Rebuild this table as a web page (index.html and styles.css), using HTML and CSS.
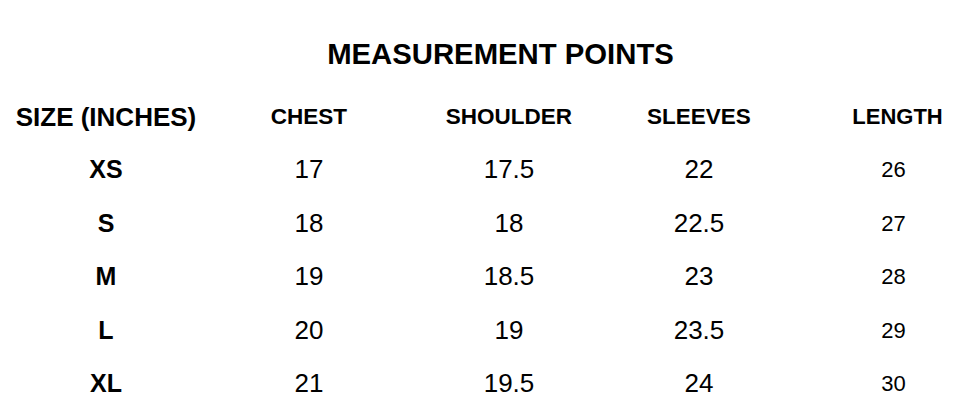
FILE: index.html
```html
<!DOCTYPE html>
<html lang="en">
<head>
<meta charset="utf-8">
<title>Measurement Points</title>
<link rel="stylesheet" href="styles.css">
</head>
<body>
<main class="chart">
  <h1 class="chart-title">MEASUREMENT POINTS</h1>
  <div class="chart-grid">
    <div class="cell head size-head">SIZE (INCHES)</div>
    <div class="cell head">CHEST</div>
    <div class="cell head">SHOULDER</div>
    <div class="cell head">SLEEVES</div>
    <div class="cell head last">LENGTH</div>

    <div class="cell size">XS</div>
    <div class="cell num">17</div>
    <div class="cell num">17.5</div>
    <div class="cell num">22</div>
    <div class="cell num last small">26</div>

    <div class="cell size">S</div>
    <div class="cell num">18</div>
    <div class="cell num">18</div>
    <div class="cell num">22.5</div>
    <div class="cell num last small">27</div>

    <div class="cell size">M</div>
    <div class="cell num">19</div>
    <div class="cell num">18.5</div>
    <div class="cell num">23</div>
    <div class="cell num last small">28</div>

    <div class="cell size">L</div>
    <div class="cell num">20</div>
    <div class="cell num">19</div>
    <div class="cell num">23.5</div>
    <div class="cell num last small">29</div>

    <div class="cell size">XL</div>
    <div class="cell num">21</div>
    <div class="cell num">19.5</div>
    <div class="cell num">24</div>
    <div class="cell num last small">30</div>
  </div>
</main>
</body>
</html>
```

FILE: styles.css
```css
html, body {
  margin: 0;
  padding: 0;
  background: #ffffff;
}

body {
  font-family: "Liberation Sans", Arial, sans-serif;
  color: #000000;
  width: 961px;
  height: 419px;
  overflow: hidden;
}

.chart {
  padding-top: 34px;
}

.chart-title {
  margin: 0 0 17px 40px;
  font-size: 29.3px;
  font-weight: 700;
  line-height: 40px;
  text-align: center;
}

.chart-grid {
  display: grid;
  grid-template-columns: 212px 194px 206px 174px 1fr;
  grid-template-rows: 52px repeat(5, 53.5px);
}

.cell {
  text-align: center;
  white-space: nowrap;
}

.head {
  font-weight: 700;
  font-size: 22.5px;
  line-height: 52px;
}

.head.size-head {
  font-size: 26px;
}

.head.last {
  font-size: 22px;
  padding-left: 48px;
}

.size {
  font-weight: 700;
  font-size: 25px;
  line-height: 53.5px;
}

.num {
  font-size: 26px;
  line-height: 53.5px;
}

.num.small {
  font-size: 22px;
}

.last {
  padding-left: 40px;
}
```
